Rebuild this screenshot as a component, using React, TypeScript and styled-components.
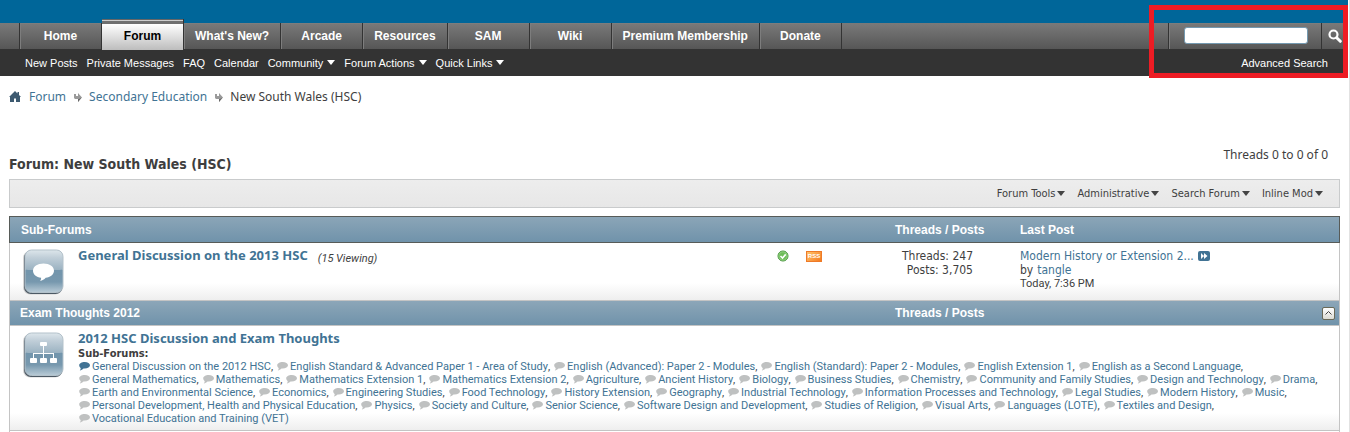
import React from 'react';
import styled, { createGlobalStyle, css } from 'styled-components';

const fonts = {
  ui: '"Liberation Sans", Arial, sans-serif',
  body: '"Noto Sans", Verdana, sans-serif',
  small: '"DejaVu Sans Condensed", Tahoma, sans-serif',
  list: 'Roboto, Tahoma, sans-serif',
};
const colors = { link: '#417394', text: '#3e3e3e', line: '#c4c4c4', dark: '#333333' };

const GlobalStyle = createGlobalStyle`
  *, *::before, *::after { box-sizing: border-box; }
  body { margin: 0; background: #fff; color: ${colors.text}; font: 12px/14px ${fonts.body}; }
  ul, ol, h1, h2, h3, p { margin: 0; padding: 0; }
  ul, ol { list-style: none; }
  a { color: ${colors.link}; text-decoration: none; }
  button { font: inherit; color: inherit; background: none; border: 0; padding: 0; cursor: pointer; }
  svg { display: block; flex: none; }
`;

const Page = styled.div`
  padding-right: 1px;
  border-right: 1px solid #e2e2e2;
`;

const Header = styled.header`
  position: relative;
  padding-top: 23px;
  background: #006699;
  font-family: ${fonts.ui};
`;

const NavBar = styled.nav`
  display: flex;
  height: 26px;
  padding-left: 19px;
  background: linear-gradient(#7a7a7a, #565656);
`;

const Tabs = styled.ul`
  display: flex;
  flex: 1;
  border-left: 1px solid ${colors.dark};
`;

const Tab = styled.li<{ $active?: boolean }>`
  display: flex;
  min-width: 82px;
  border-right: 1px solid ${colors.dark};
  box-shadow: inset 1px 1px 0 #7d7d7d;
  ${(p) =>
    p.$active &&
    css`
      margin: -4px 0 -1px;
      padding-top: 4px;
      z-index: 1;
      background: linear-gradient(#666 1px, #ccc 1px, #ccc 2px, #6f6f6f 2px, #6f6f6f 5px, #fff 5px, #bdbdbd);
      box-shadow: none;
    `}
`;

const TabLink = styled.a<{ $active?: boolean }>`
  flex: 1;
  padding: 0 11px;
  color: ${(p) => (p.$active ? '#000' : '#fff')};
  font-size: 12px;
  font-weight: bold;
  line-height: 27px;
  text-align: center;
  white-space: nowrap;
`;

const SearchForm = styled.form`
  display: flex;
  border-left: 1px solid ${colors.dark};
`;

const SearchField = styled.label`
  padding: 4px 13px 0 15px;
  border-right: 1px solid ${colors.dark};
  box-shadow: inset 1px 1px 0 #7d7d7d;
`;

const SearchInput = styled.input`
  display: block;
  width: 124px;
  height: 17px;
  padding: 0 4px;
  border: 1px solid #7499b0;
  border-radius: 3px;
  background: #fff;
  font: 11px ${fonts.ui};
`;

const SearchButton = styled.button`
  padding: 0 6px;
`;

const SubNav = styled.nav`
  display: flex;
  align-items: center;
  justify-content: space-between;
  height: 27px;
  padding: 0 20px 0 25px;
  background: ${colors.dark};
  font-size: 11px;
`;

const SubNavList = styled.ul`
  display: flex;
  gap: 9px;
`;

const SubNavLink = styled.a`
  display: flex;
  align-items: center;
  color: #fff;
`;

const MenuButton = styled.button`
  display: flex;
  align-items: center;
  gap: 4px;
  white-space: nowrap;
`;

const SubNavButton = styled(MenuButton)`
  color: #fff;
`;

const Highlight = styled.div`
  position: absolute;
  z-index: 2;
  top: 5px;
  right: 0;
  width: 199px;
  height: 73px;
  border: 5px solid #ed1c24;
  pointer-events: none;
`;

const Main = styled.main`
  padding: 14px 8px 0 9px;
`;

const Breadcrumb = styled.ol`
  display: flex;
  align-items: center;
  gap: 8px;
  height: 14px;
`;

const Crumb = styled.li`
  display: flex;
  align-items: center;
  gap: 7px;
`;

const TitleRow = styled.div`
  display: flex;
  justify-content: space-between;
  align-items: flex-start;
  margin-top: 44px;
  padding-right: 12px;
`;

const Title = styled.h1`
  padding: 7px 0 1px;
  font: bold 14px/18px ${fonts.small};
`;

const Toolbar = styled.div`
  display: flex;
  justify-content: flex-end;
  gap: 12px;
  height: 29px;
  margin: 5px 0 8px;
  padding-right: 16px;
  border: 1px solid #c9cbcc;
  background: linear-gradient(#ededed, #e7e7e7);
  font: 11px/14px ${fonts.small};
`;

const ToolButton = styled(MenuButton)`
  gap: 2px;
`;

const ForumTable = styled.table`
  width: 100%;
  border-spacing: 0;
  table-layout: fixed;
`;

const Column = styled.col<{ $width?: number }>`
  width: ${(p) => (p.$width ? `${p.$width}px` : 'auto')};
`;

const HeadRow = styled.tr<{ $minor?: boolean }>`
  height: ${(p) => (p.$minor ? 25 : 27)}px;
  background: linear-gradient(#8ca6b8, #6f92aa);
  color: #fff;
  font: bold 12px/14px ${fonts.ui};
  text-align: left;

  th {
    padding: 0;
    border: 0 solid ${(p) => (p.$minor ? colors.line : '#575b58')};
    border-width: ${(p) => (p.$minor ? '0 0 1px' : '1px 0')};
  }
  th:first-child { padding-left: ${(p) => (p.$minor ? 10 : 11)}px; border-left-width: 1px; }
  th:last-child { border-right-width: 1px; }
`;

const BodyRow = styled.tr`
  background: linear-gradient(to top, #ededed, #fff 18px);

  td {
    padding: 6px 0 5px;
    border: 0 solid ${colors.line};
    border-bottom-width: 1px;
    vertical-align: top;
  }
  td:first-child { padding-left: 12px; border-left-width: 1px; }
  td:nth-child(2) { padding-top: 5px; }
  td:last-child { border-right-width: 1px; }
`;

const TrailingCell = styled.td`
  height: 2px;
  padding: 0;
  border: solid ${colors.line};
  border-width: 0 1px;
`;

const ForumTitle = styled.h2`
  display: inline;
  font: bold 13px/14px ${fonts.body};
`;

const Viewing = styled.em`
  margin-left: 10px;
  font: italic 11px/12px ${fonts.list};
  vertical-align: -2px;
`;

const StatusIcons = styled.div`
  display: flex;
  align-items: center;
  gap: 17px;
  padding-top: 1px;
`;

const Stats = styled.ul`
  padding-right: 47px;
  font-family: ${fonts.small};
  text-align: right;
`;

const LastPost = styled.div`
  font-family: ${fonts.small};

  p { display: flex; align-items: center; gap: 4px; }
`;

const PostTime = styled.time`
  display: block;
  font: 11px/13px ${fonts.list};
`;

const HeadEnd = styled.div`
  display: flex;
  justify-content: flex-end;
  padding-right: 4px;
`;

const CollapseButton = styled.button`
  display: grid;
  place-items: center;
  width: 13px;
  height: 13px;
  border: 1px solid #6b6a58;
  border-radius: 2px;
  background: linear-gradient(#fff, #dcdcd4);
`;

const SubHeading = styled.h3`
  margin-top: 1px;
  font: bold 11px/13px ${fonts.small};
`;

const SubForums = styled.ul`
  display: flex;
  flex-wrap: wrap;
  column-gap: 4px;
  padding-left: 1px;
  font: 11px/13px ${fonts.list};
`;

const SubForum = styled.li`
  display: flex;
  align-items: center;
  white-space: nowrap;

  svg { margin-right: 2px; }
`;

const Caret = ({ fill }: { fill: string }) => (
  <svg width="8" height="5" viewBox="0 0 8 5" aria-hidden="true"><path d="M0 0h8L4 5z" fill={fill} /></svg>
);

const SearchIcon = () => (
  <svg width="14" height="14" viewBox="0 0 14 14" fill="none" stroke="#fff" aria-hidden="true">
    <circle cx="5.500" cy="5.500" r="4" strokeWidth="2.200" />
    <path d="M8.700 8.700l3.600 3.600" strokeWidth="3" strokeLinecap="round" />
  </svg>
);

const HomeIcon = () => (
  <svg width="12" height="12" viewBox="0 0 12 12" fill="#3d5a70" role="img" aria-label="Home">
    <path d="M6 0l2.500 2.400V1H10v2.900L12 6h-1v5H7V7.500H5V11H1V6H0z" />
  </svg>
);

const CrumbArrow = () => (
  <svg width="8" height="10" viewBox="0 0 8 10" aria-hidden="true">
    <path d="M0 2h2v2h2V1l4 4.500L4 10V7H1L0 6z" fill="#9a9a9a" />
    <path d="M4 7h1l2.500-1.500L4 10z" fill="#666" />
  </svg>
);

const Tile = ({ id, children }: { id: string; children: React.ReactNode }) => (
  <svg width="42" height="46" viewBox="0 0 42 46" aria-hidden="true">
    <defs>
      <linearGradient id={id} x1="0" y1="0" x2="0" y2="1">
        <stop offset="0" stopColor="#dde6eb" />
        <stop offset=".18" stopColor="#c0ced8" />
        <stop offset=".46" stopColor="#9cb3c2" />
        <stop offset=".48" stopColor="#7395ac" />
        <stop offset=".75" stopColor="#7798ae" />
        <stop offset="1" stopColor="#b9cbd6" />
      </linearGradient>
    </defs>
    <rect x="1" y="2" width="39" height="43.500" rx="7" fill="#bbb" opacity=".6" />
    <rect x="2" y="2" width="38.500" height="43" rx="7" fill="#4c5964" />
    <rect x="3" y="1" width="38" height="42.500" rx="6.500" fill={`url(#${id})`} stroke="#b3c1ca" />
    <path d="M4 20.500c10 3 24 3 36 0v5H4z" fill="#7395ac" opacity=".7" />
    {children}
  </svg>
);

const ForumTile = () => (
  <Tile id="tile-forum">
    <path d="M21.500 14.500c6 0 10.500 3.100 10.500 7.200 0 3.700-3.500 6.600-8.300 7.100-1.500 1.700-3.300 2.800-5.700 3.200.9-1 1.200-2 1.100-3.200-4.700-.5-8.100-3.400-8.100-7.100 0-4.100 4.500-7.200 10.500-7.200z" fill="#fff" />
  </Tile>
);

const CategoryTile = () => (
  <Tile id="tile-category">
    <g fill="#fff">
      <rect x="18" y="10" width="7" height="4" rx="1" />
      <rect x="8" y="26" width="7" height="5" rx="1" />
      <rect x="18" y="26" width="7" height="5" rx="1" />
      <rect x="28" y="26" width="7" height="5" rx="1" />
      <path d="M21 13h1v8h10v6h-1v-5h-9v5h-1v-5h-9v5h-1v-6h10z" />
    </g>
  </Tile>
);

const CheckIcon = () => (
  <svg width="12" height="12" viewBox="0 0 12 12" role="img" aria-label="Subscribed">
    <circle cx="6" cy="6" r="5" fill="#6ebd5a" stroke="#438f3a" />
    <circle cx="6" cy="6" r="4.200" fill="none" stroke="#a5dc93" strokeWidth=".7" />
    <path d="M3.500 6l2 2 3.200-3.600" fill="none" stroke="#fff" strokeWidth="1.600" />
  </svg>
);

const RssBadge = styled.a`
  width: 16px;
  height: 11px;
  border: 1px solid #ee7a28;
  background: linear-gradient(135deg, #ffc46b, #f47a20);
  color: #fff;
  font: bold 6px/9px ${fonts.ui};
  text-align: center;
`;

const GoIcon = () => (
  <svg width="12" height="10" viewBox="0 0 12 10" role="img" aria-label="Go to last post">
    <rect width="12" height="10" rx="2" fill="#417394" />
    <path d="M3 2l3 3-3 3zM6 2l3.500 3L6 8z" fill="#fff" />
  </svg>
);

const Bubble = ({ fill }: { fill: string }) => (
  <svg width="11" height="9" viewBox="0 0 11 9" aria-hidden="true">
    <path d="M5.700 0C8.700 0 11 1.400 11 3.300S8.700 6.600 5.700 6.600H4.500C3.500 7.700 2.200 8.300.8 8.400c.7-.7 1-1.400.9-2.300C.7 5.400.2 4.400.2 3.300.2 1.400 2.700 0 5.700 0z" fill={fill} />
  </svg>
);

const tabs = ['Home', 'Forum', "What's New?", 'Arcade', 'Resources', 'SAM', 'Wiki', 'Premium Membership', 'Donate'];
const subLinks = ['New Posts', 'Private Messages', 'FAQ', 'Calendar'];
const subMenus = ['Community', 'Forum Actions', 'Quick Links'];
const tools = ['Forum Tools', 'Administrative', 'Search Forum', 'Inline Mod'];
const subForums = [
  'General Discussion on the 2012 HSC', 'English Standard & Advanced Paper 1 - Area of Study',
  'English (Advanced): Paper 2 - Modules', 'English (Standard): Paper 2 - Modules', 'English Extension 1',
  'English as a Second Language', 'General Mathematics', 'Mathematics', 'Mathematics Extension 1',
  'Mathematics Extension 2', 'Agriculture', 'Ancient History', 'Biology', 'Business Studies', 'Chemistry',
  'Community and Family Studies', 'Design and Technology', 'Drama', 'Earth and Environmental Science',
  'Economics', 'Engineering Studies', 'Food Technology', 'History Extension', 'Geography',
  'Industrial Technology', 'Information Processes and Technology', 'Legal Studies', 'Modern History', 'Music',
  'Personal Development, Health and Physical Education', 'Physics', 'Society and Culture', 'Senior Science',
  'Software Design and Development', 'Studies of Religion', 'Visual Arts', 'Languages (LOTE)',
  'Textiles and Design', 'Vocational Education and Training (VET)',
];

export default function App() {
  return (
    <Page>
      <GlobalStyle />
      <Header>
        <NavBar>
          <Tabs>
            {tabs.map((name) => (
              <Tab key={name} $active={name === 'Forum'}>
                <TabLink href="#" $active={name === 'Forum'}>{name}</TabLink>
              </Tab>
            ))}
          </Tabs>
          <SearchForm>
            <SearchField><SearchInput type="text" aria-label="Search" /></SearchField>
            <SearchButton type="button" aria-label="Search"><SearchIcon /></SearchButton>
          </SearchForm>
        </NavBar>
        <SubNav>
          <SubNavList>
            {subLinks.map((name) => <li key={name}><SubNavLink href="#">{name}</SubNavLink></li>)}
            {subMenus.map((name) => (
              <li key={name}><SubNavButton type="button">{name}<Caret fill="#fff" /></SubNavButton></li>
            ))}
          </SubNavList>
          <SubNavLink href="#">Advanced Search</SubNavLink>
        </SubNav>
        <Highlight />
      </Header>
      <Main>
        <Breadcrumb>
          <Crumb><a href="#"><HomeIcon /></a></Crumb>
          <Crumb><a href="#">Forum</a></Crumb>
          <Crumb><CrumbArrow /><a href="#">Secondary Education</a></Crumb>
          <Crumb><CrumbArrow />New South Wales (HSC)</Crumb>
        </Breadcrumb>
        <TitleRow>
          <Title>Forum: New South Wales (HSC)</Title>
          <p>Threads 0 to 0 of 0</p>
        </TitleRow>
        <Toolbar>
          {tools.map((name) => <ToolButton key={name} type="button">{name}<Caret fill="#444" /></ToolButton>)}
        </Toolbar>
        <ForumTable>
          <colgroup>
            <Column $width={69} />
            <Column />
            <Column $width={118} />
            <Column $width={125} />
            <Column $width={320} />
          </colgroup>
          <thead>
            <HeadRow>
              <th colSpan={3}>Sub-Forums</th>
              <th>Threads / Posts</th>
              <th>Last Post</th>
            </HeadRow>
          </thead>
          <tbody>
            <BodyRow>
              <td><ForumTile /></td>
              <td>
                <ForumTitle><a href="#">General Discussion on the 2013 HSC</a></ForumTitle>
                <Viewing>(15 Viewing)</Viewing>
              </td>
              <td>
                <StatusIcons><CheckIcon /><RssBadge href="#">RSS</RssBadge></StatusIcons>
              </td>
              <td>
                <Stats><li>Threads: 247</li><li>Posts: 3,705</li></Stats>
              </td>
              <td>
                <LastPost>
                  <p><a href="#">Modern History or Extension 2...</a><a href="#"><GoIcon /></a></p>
                  <p>by <a href="#">tangle</a></p>
                  <PostTime>Today, 7:36 PM</PostTime>
                </LastPost>
              </td>
            </BodyRow>
            <HeadRow $minor>
              <th colSpan={3}>Exam Thoughts 2012</th>
              <th>Threads / Posts</th>
              <th>
                <HeadEnd>
                  <CollapseButton type="button" aria-label="Collapse">
                    <svg width="7" height="4" viewBox="0 0 7 4" fill="none" stroke="#444" aria-hidden="true"><path d="M.5 3.500l3-3 3 3" /></svg>
                  </CollapseButton>
                </HeadEnd>
              </th>
            </HeadRow>
            <BodyRow>
              <td><CategoryTile /></td>
              <td colSpan={4}>
                <ForumTitle><a href="#">2012 HSC Discussion and Exam Thoughts</a></ForumTitle>
                <SubHeading>Sub-Forums:</SubHeading>
                <SubForums>
                  {subForums.map((name, i) => (
                    <SubForum key={name}>
                      <Bubble fill={i === 0 ? '#417394' : '#bfc1c1'} />
                      <a href="#">{name}</a>{i < subForums.length - 1 && ','}
                    </SubForum>
                  ))}
                </SubForums>
              </td>
            </BodyRow>
            <tr><TrailingCell colSpan={5} /></tr>
          </tbody>
        </ForumTable>
      </Main>
    </Page>
  );
}
